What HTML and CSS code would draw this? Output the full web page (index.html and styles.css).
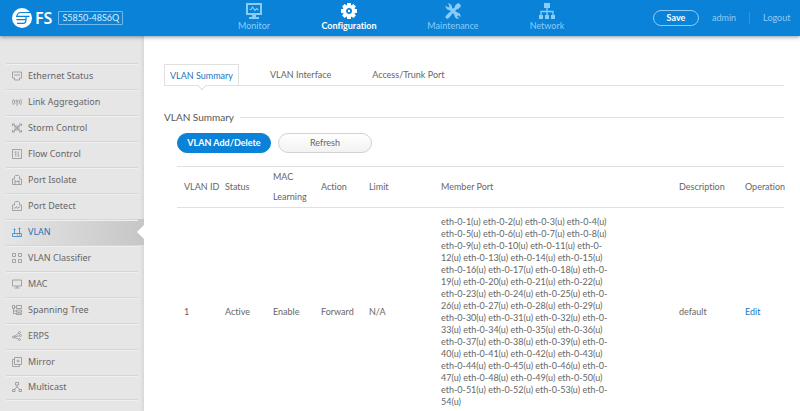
FILE: index.html
```
<!DOCTYPE html>
<html lang="en">
  <head>
    <meta charset="UTF-8">
    <meta name="viewport" content="width=device-width, initial-scale=1">
    <title>S5850-48S6Q</title>
    <link rel="stylesheet" href="styles.css">
  </head>
  <body>

    <header class="topbar">
      <div class="brand">
        <svg class="brand-mark" viewBox="0 0 20 20" aria-hidden="true">
          <circle cx="10" cy="10" r="10" fill="#fff"/>
          <path d="M20 4.500H9Q5.500 4.500 5 7.800M17.500 8.300H4M4.500 11.700H14M14 8.300V11.700Q14 15.300 11 15.300H5" fill="none" stroke="#0a82d8" stroke-width="1.200"/>
        </svg>
        <span class="brand-name">FS</span>
        <span class="model">S5850-48S6Q</span>
      </div>

      <nav class="mainnav">
        <a href="#monitor">
          <svg viewBox="0 0 18 18"><path fill="currentColor" fill-rule="evenodd" d="M1 1h16v12H1zM3 3v8h12V3zM7 13h4v2h3v2H4v-2h3z"/><path d="M4.500 7.500H6L7.500 5 10 8.500l1.500-2 2 1.500" fill="none" stroke="currentColor" stroke-width="1.200"/></svg>
          Monitor
        </a>
        <a href="#configuration" class="active">
          <svg viewBox="0 0 18 18"><g fill="currentColor"><path id="tooth" d="M7.200 1h3.600l.6 4H6.600zM7.200 17h3.600l.6-4H6.600z"/><use href="#tooth" transform="rotate(45 9 9)"/><use href="#tooth" transform="rotate(90 9 9)"/><use href="#tooth" transform="rotate(135 9 9)"/></g><circle cx="9" cy="9" r="4.500" fill="none" stroke="currentColor" stroke-width="3"/><circle cx="9" cy="9" r="1.200" fill="currentColor"/></svg>
          Configuration
        </a>
        <a href="#maintenance">
          <svg viewBox="0 0 18 18"><path d="M5 5l8.500 8.500" stroke="currentColor" stroke-width="3.200"/><path d="M13.500 4.500l-9 9" stroke="currentColor" stroke-width="3"/><path fill="currentColor" d="M1.500 3.500l3 2.200 1.300-1.300L3.800 1.300A4.200 4.200 0 0 1 8 6.500L5.800 8.200A4.200 4.200 0 0 1 1.500 3.500zM10.500 12.200l1.700-1.700c3-.5 5 2 4.300 4.800l-2.200-2.100-1.300 1.300 2.200 2.200c-3 .6-5.200-1.500-4.700-4.500zM13.500 1.200q3.600.2 3.300 3.300l-3 3-3.300-3.300zM1.500 14.200l3.500-3.500 2.500 2.500-3.600 3.500q-2.700.2-2.400-2.500z"/></svg>
          Maintenance
        </a>
        <a href="#network">
          <svg viewBox="0 0 18 18"><path fill="currentColor" d="M6 1h6v5H6zM1 13h4v4H1zM7 13h4v4H7zM13 13h4v4h-4z"/><path d="M9 6v7M3 13V9.500h12V13" fill="none" stroke="currentColor" stroke-width="1.300"/></svg>
          Network
        </a>
      </nav>

      <div class="account">
        <button type="button" class="save">Save</button>
        <a href="#admin">admin</a>
        <a href="#logout" class="logout">Logout</a>
      </div>
    </header>

    <div class="layout">
      <aside class="sidebar">
        <ul>
          <li><a href="#ethernet"><svg viewBox="0 0 10 10"><path d="M.5 1h9v6h-2v2h-5V7h-2zM3 3v2M5 3v2M7 3v2"/></svg>Ethernet Status</a></li>
          <li><a href="#aggregation"><svg viewBox="0 0 10 10"><path d="M1.500 2Q-.5 5 1.500 8M8.500 2q2 3 0 6M3 3Q1.800 5 3 7M7 3q1.200 2 0 4M5 5v4"/><circle cx="5" cy="4" r="1"/></svg>Link Aggregation</a></li>
          <li><a href="#storm"><svg viewBox="0 0 10 10"><path d="M3 3h4v4H3zM.5 1L3 3M9.500 1L7 3M.5 9L3 7M9.500 9L7 7M.5 3V1H3M7 1h2.500v2M.5 7v2H3M7 9h2.500V7M3 3l4 4M7 3L3 7"/></svg>Storm Control</a></li>
          <li><a href="#flow"><svg viewBox="0 0 10 10"><path d="M.5.5h9v9h-9zM3.800 7.500v-5L2.800 3.500M6.200 2.500v5l1-1"/></svg>Flow Control</a></li>
          <li><a href="#isolate"><svg viewBox="0 0 10 10"><path d="M.5 9.500V4h2V1.500L3.500.5h3l1 1V4h2v5.500zM3 9.500V5M7 9.500V5M3 6.500h4"/></svg>Port Isolate</a></li>
          <li><a href="#detect"><svg viewBox="0 0 10 10"><path d="M.5 9.500V4h2V1.500L3.500.5h3l1 1V4h2v5.500zM2 7h1.500l1-1.500 1 2L7 6h1"/></svg>Port Detect</a></li>
          <li class="current"><a href="#vlan" aria-current="page"><svg viewBox="0 0 10 10"><path d="M.5 6.500h9v3h-9zM2.500 6.500V1.500M7.500 6.500V.5M1.500 2.500h2M6.500 1.500h2M5 8h1M7 8h1"/></svg>VLAN</a></li>
          <li><a href="#classifier"><svg viewBox="0 0 10 10"><path d="M.5.5h3v3h-3zM6.500.5h3v3h-3zM.5 6.500h3v3h-3zM6.500 6.500h3v3h-3z"/></svg>VLAN Classifier</a></li>
          <li><a href="#mac"><svg viewBox="0 0 10 10"><path d="M.5 1h9v6h-9zM5 7v2M2.500 9h5"/></svg>MAC</a></li>
          <li><a href="#spanning"><svg viewBox="0 0 10 10"><path d="M.5.5h2v3h-2zM4.500.5h5v3h-5zM2.500 2h2M1.500 3.500v5h3M1.500 6h3M4.500 5h5v2h-5zM4.500 8h5v1.500h-5z"/></svg>Spanning Tree</a></li>
          <li><a href="#erps"><svg viewBox="0 0 10 10"><circle cx="1.500" cy="6" r="1"/><circle cx="7.500" cy="1.500" r="1"/><circle cx="8.500" cy="4.500" r="1"/><circle cx="7.500" cy="8.500" r="1"/><path d="M2.300 5.300l4.500-3M2.500 6l5-1.300M2.400 6.500l4.200 1.700"/></svg>ERPS</a></li>
          <li><a href="#mirror"><svg viewBox="0 0 10 10"><path d="M2.500.5h7v7h-7zM2.500 2.500h-2v7h7v-2M6 2.500v3M4.500 4h3"/></svg>Mirror</a></li>
          <li><a href="#multicast"><svg viewBox="0 0 10 10"><path d="M3.500.5h3v2.500h-3zM.5 7.500h2.500v2H.5zM7 7.500h2.500v2H7zM5 3v2L2 7.500M5 5l3 2.500"/></svg>Multicast</a></li>
        </ul>
      </aside>

      <main class="content">
        <nav class="tabs">
          <a href="#vlan-summary" class="active">VLAN Summary</a>
          <a href="#vlan-interface">VLAN Interface</a>
          <a href="#trunk">Access/Trunk Port</a>
        </nav>

        <section>
          <h1>VLAN Summary</h1>
          <div class="actions">
            <button type="button" class="btn primary">VLAN Add/Delete</button>
            <button type="button" class="btn">Refresh</button>
          </div>

          <table class="vlans">
            <colgroup>
              <col class="c-id"><col class="c-short"><col class="c-short"><col class="c-short">
              <col class="c-limit"><col><col class="c-desc"><col class="c-op">
            </colgroup>
            <thead>
              <tr><th>VLAN ID</th><th>Status</th><th class="wrap">MAC Learning</th><th>Action</th><th>Limit</th><th>Member Port</th><th>Description</th><th>Operation</th></tr>
            </thead>
            <tbody>
              <tr>
                <td>1</td>
                <td>Active</td>
                <td>Enable</td>
                <td>Forward</td>
                <td>N/A</td>
                <td class="ports">
                  eth-0-1(u) eth-0-2(u) eth-0-3(u) eth-0-4(u)<br>
                  eth-0-5(u) eth-0-6(u) eth-0-7(u) eth-0-8(u)<br>
                  eth-0-9(u) eth-0-10(u) eth-0-11(u) eth-0-<br>12(u)
                  eth-0-13(u) eth-0-14(u) eth-0-15(u)<br>
                  eth-0-16(u) eth-0-17(u) eth-0-18(u) eth-0-<br>19(u)
                  eth-0-20(u) eth-0-21(u) eth-0-22(u)<br>
                  eth-0-23(u) eth-0-24(u) eth-0-25(u) eth-0-<br>26(u)
                  eth-0-27(u) eth-0-28(u) eth-0-29(u)<br>
                  eth-0-30(u) eth-0-31(u) eth-0-32(u) eth-0-<br>33(u)
                  eth-0-34(u) eth-0-35(u) eth-0-36(u)<br>
                  eth-0-37(u) eth-0-38(u) eth-0-39(u) eth-0-<br>40(u)
                  eth-0-41(u) eth-0-42(u) eth-0-43(u)<br>
                  eth-0-44(u) eth-0-45(u) eth-0-46(u) eth-0-<br>47(u)
                  eth-0-48(u) eth-0-49(u) eth-0-50(u)<br>
                  eth-0-51(u) eth-0-52(u) eth-0-53(u) eth-0-<br>54(u)
                </td>
                <td>default</td>
                <td><a href="#edit">Edit</a></td>
              </tr>
            </tbody>
          </table>
        </section>
      </main>
    </div>

  </body>
</html>
```
FILE: styles.css
```
:root {
  --clr-brand: #0a82d8;
  --clr-link: #2474bd;
  --clr-text: #666;
  --clr-line: #e0e0e0;
  --clr-side: #e6e6e6;
}

*, *::before, *::after {
  box-sizing: border-box;
}

body {
  margin: 0;
  min-height: 100vh;
  display: flex;
  flex-direction: column;
  color: var(--clr-text);
  background: #fff;
  font: 9px/12px Lato, "Open Sans", sans-serif;
  font-variant-ligatures: none;
}

a {
  color: inherit;
  text-decoration: none;
}

button {
  font: inherit;
  cursor: pointer;
}


/* Top bar */

.topbar {
  position: relative;
  display: grid;
  grid-template-columns: 205px 1fr 147px;
  height: 36px;
  color: #8accf8;
  background: var(--clr-brand);
  box-shadow: 0 1px 4px rgba(0, 50, 90, .5);
}

.brand {
  display: flex;
  align-items: center;
  padding-left: 12px;
  color: #fff;
}

.brand-mark {
  width: 20px;
  height: 20px;
}

.brand-name {
  margin: 0 6px 0 3px;
  font: 600 16px/20px "Noto Sans", sans-serif;
}

.model {
  padding: 0 3px;
  color: #d8eefc;
  border: 1px solid #6fb9ec;
  border-radius: 1px;
}

.mainnav {
  display: grid;
  grid-template-columns: 98px 92px 116px 72px;
}

.mainnav a {
  display: flex;
  flex-direction: column;
  align-items: center;
  padding-top: 2px;
}

.mainnav svg {
  width: 18px;
  height: 18px;
}

.mainnav .active {
  color: #fff;
  font-weight: bold;
}

.account {
  display: flex;
  align-items: center;
}

.save {
  width: 46px;
  height: 16px;
  margin-right: 13px;
  padding: 0;
  color: #fff;
  background: none;
  border: 1px solid #8accf8;
  border-radius: 8px;
  font-weight: bold;
  line-height: 14px;
}

.logout {
  margin-left: 13px;
  padding-left: 13px;
  border-left: 1px solid #2f97e0;
}


/* Side menu */

.layout {
  flex: 1;
  display: grid;
  grid-template-columns: 144px 1fr;
}

.sidebar {
  padding-top: 27px;
  background: linear-gradient(to right, transparent 140px, #d8d8d8) var(--clr-side);
  font-family: "Noto Sans", "Open Sans", sans-serif;
}

.sidebar ul {
  margin: 0;
  padding: 0;
  list-style: none;
}

.sidebar li {
  position: relative;
  height: 26px;
}

.sidebar li:last-child {
  height: 24px;
}

/* hairline on top of each row, and under the last */
.sidebar li::before,
.sidebar li:last-child::after {
  content: '';
  position: absolute;
  top: 0;
  left: 6px;
  right: 6px;
  height: 2px;
  background: linear-gradient(#d6d6d6 50%, #f0f0f0 50%);
}

.sidebar li:last-child::after {
  top: 100%;
}

.sidebar a {
  display: flex;
  align-items: center;
  gap: 6px;
  height: 100%;
  padding-left: 12px;
}

.sidebar svg {
  width: 10px;
  height: 10px;
  fill: none;
  stroke: #929292;
  stroke-width: 0.8;
}

.sidebar .current {
  color: var(--clr-link);
  background: linear-gradient(to right, var(--clr-side), #c6c6c6);
}

.sidebar .current svg {
  stroke: #2b8acb;
}

.sidebar .current::after {
  content: '';
  position: absolute;
  top: 6px;
  right: 0;
  border: solid transparent;
  border-width: 7px 7px 7px 0;
  border-right-color: #fff;
}


/* Content */

.content {
  padding: 28px 16px 0 20px;
}

.tabs {
  display: flex;
  height: 22px;
  border-bottom: 1px solid var(--clr-line);
  line-height: 22px;
}

.tabs a {
  position: relative;
  margin-right: 21px;
  padding: 0 10px;
}

.tabs .active {
  padding: 0 5px;
  color: var(--clr-link);
  border: solid var(--clr-line);
  border-width: 1px 1px 0;
}

.tabs .active::after {
  content: '';
  position: absolute;
  bottom: -4px;
  left: 50%;
  width: 6px;
  height: 6px;
  margin-left: -3px;
  transform: rotate(45deg);
  background: #fff;
  border: solid var(--clr-line);
  border-width: 0 1px 1px 0;
}

h1 {
  display: flex;
  align-items: center;
  gap: 6px;
  margin: 24px 0 9px;
  color: #555;
  font-size: 10px;
  font-weight: normal;
  line-height: 14px;
}

h1::after {
  content: '';
  flex: 1;
  height: 1px;
  background: var(--clr-line);
}

.actions {
  display: flex;
  gap: 7px;
  padding-left: 13px;
}

.btn {
  width: 94px;
  height: 20px;
  padding: 0;
  color: var(--clr-text);
  background: linear-gradient(#fff, #f2f2f2);
  border: 1px solid #d2d2d2;
  border-radius: 10px;
}

.btn.primary {
  color: #fff;
  background: var(--clr-brand);
  border-color: var(--clr-brand);
  font-weight: bold;
}

.vlans {
  width: calc(100% - 13px);
  margin: 13px 0 0 13px;
  table-layout: fixed;
  border-collapse: collapse;
}

.vlans th,
.vlans td {
  padding: 8px 0 8px 7px;
  text-align: left;
  font-weight: normal;
}

.vlans th {
  padding-top: 0;
  padding-bottom: 0;
  line-height: 20px;
  white-space: nowrap;
  border: solid var(--clr-line);
  border-width: 1px 0;
}

.vlans th.wrap {
  white-space: normal;
}

.vlans .ports {
  white-space: nowrap;
}

.vlans td a {
  color: var(--clr-link);
}

.c-id { width: 41px }
.c-short { width: 48px }
.c-limit { width: 72px }
.c-desc { width: 66px }
.c-op { width: 46px }
```
